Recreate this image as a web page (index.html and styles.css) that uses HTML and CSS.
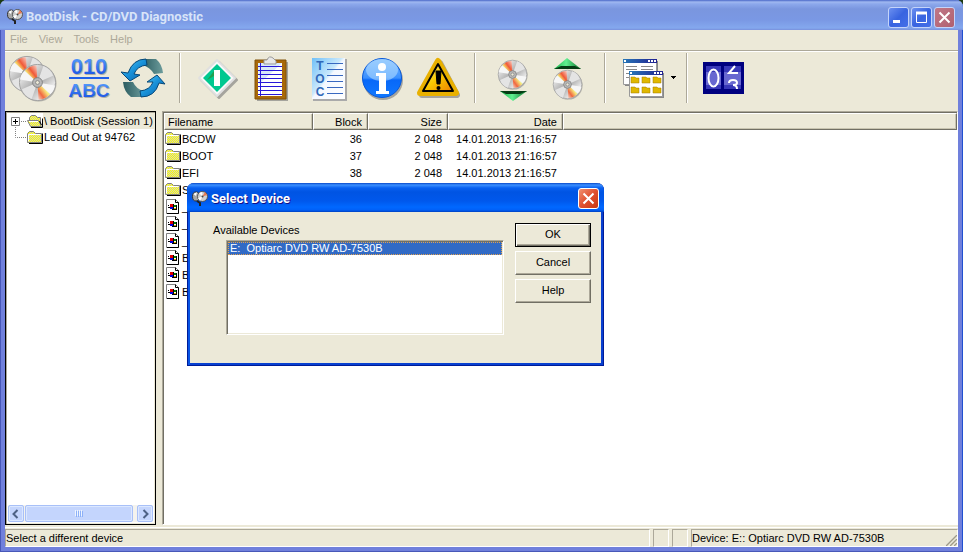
FILE: index.html
```html
<!DOCTYPE html>
<html lang="en">
<head>
<meta charset="utf-8">
<title>BootDisk - CD/DVD Diagnostic</title>
<link rel="stylesheet" href="styles.css">
</head>
<body>
<svg class="defs" aria-hidden="true">
  <defs>
    <linearGradient id="gSilver" x1="0" y1="0" x2="1" y2="1"><stop offset="0" stop-color="#909090"/><stop offset=".25" stop-color="#dcdcdc"/><stop offset=".5" stop-color="#a8a8a8"/><stop offset=".75" stop-color="#e8e8e8"/><stop offset="1" stop-color="#848484"/></linearGradient>
    <linearGradient id="gRainA" x1="0" y1="1" x2="1" y2="0"><stop offset=".1" stop-color="#8ce0d8"/><stop offset=".35" stop-color="#f8f070"/><stop offset=".6" stop-color="#f05838"/><stop offset="1" stop-color="#f8d8d0"/></linearGradient>
    <linearGradient id="gRainB" x1="1" y1="0" x2="0" y2="1"><stop offset=".1" stop-color="#60d8e0"/><stop offset=".4" stop-color="#f8f080"/><stop offset=".7" stop-color="#f06840"/><stop offset="1" stop-color="#f0e0d8"/></linearGradient>
    <linearGradient id="gArrow" x1="0" y1="0" x2="1" y2="1"><stop offset="0" stop-color="#58d0f8"/><stop offset=".5" stop-color="#1890d8"/><stop offset="1" stop-color="#0860a8"/></linearGradient>
    <linearGradient id="gTeal" x1="0" y1="0" x2="1" y2="0"><stop offset="0" stop-color="#2c5c60"/><stop offset="1" stop-color="#6c9c9c"/></linearGradient>
    <linearGradient id="gInfo" x1="0" y1="0" x2="0" y2="1"><stop offset="0" stop-color="#78b8ff"/><stop offset=".5" stop-color="#3a90ff"/><stop offset=".55" stop-color="#0868f8"/><stop offset="1" stop-color="#1078ff"/></linearGradient>
    <linearGradient id="gWarn" x1="0" y1="0" x2="1" y2="1"><stop offset="0" stop-color="#fff080"/><stop offset=".5" stop-color="#f8c800"/><stop offset="1" stop-color="#f08000"/></linearGradient>
    <linearGradient id="gPaper" x1="0" y1="0" x2="1" y2="1"><stop offset="0" stop-color="#70c0f8"/><stop offset=".45" stop-color="#c8e8fc"/><stop offset=".5" stop-color="#f4f8ff"/><stop offset="1" stop-color="#ffffff"/></linearGradient>
    <linearGradient id="gGreen" x1="0" y1="0" x2="1" y2="0"><stop offset="0" stop-color="#18b048"/><stop offset=".45" stop-color="#60f090"/><stop offset="1" stop-color="#087028"/></linearGradient>
    <linearGradient id="gCap" x1="0" y1="0" x2="1" y2="0"><stop offset="0" stop-color="#2878b8"/><stop offset="1" stop-color="#202090"/></linearGradient>
    <linearGradient id="gText" x1="0" y1="0" x2="0" y2="1"><stop offset="0" stop-color="#60a8ff"/><stop offset="1" stop-color="#1048e0"/></linearGradient>
    <pattern id="dither" width="2" height="2" patternUnits="userSpaceOnUse"><rect width="2" height="2" fill="#ffff00"/><rect x="1" width="1" height="1" fill="#d0d0c0"/><rect y="1" width="1" height="1" fill="#d0d0c0"/></pattern>
    <symbol id="cd" viewBox="0 0 40 40">
      <circle cx="21" cy="21" r="18.500" fill="#777" opacity=".5"/>
      <circle cx="20" cy="20" r="18.500" fill="url(#gSilver)" stroke="#a0a0a0"/>
      <path d="M20 20 2 17Q3 11 7 8ZM20 20 38 23Q37 29 33 32Z" fill="#f6f6f6"/>
      <path d="M20 20 26 3Q34 6 36 13ZM20 20 14 37Q6 34 4 27Z" fill="#e4e4e4"/>
      <path d="M20 20 7 8Q13 2 19 2.500Z" fill="url(#gRainA)"/>
      <path d="M20 20 33 32Q27 38 21 37.500Z" fill="url(#gRainB)"/>
      <circle cx="20" cy="20" r="5" fill="#b8b8b8" stroke="#808080"/>
      <circle cx="20" cy="20" r="2" fill="#ece9d8" stroke="#888"/>
    </symbol>
    <symbol id="app" viewBox="0 0 16 16">
      <ellipse cx="4" cy="5.500" rx="3.500" ry="4.500" fill="#a8a8a8" stroke="#333"/>
      <path d="M4 5 1.500 3 5 1Z" fill="#fff"/>
      <circle cx="10.500" cy="5.500" r="5" fill="#d0d0d0" stroke="#555"/>
      <path d="M10.500 5.500 13 1 15 4Z" fill="#e87850"/><path d="M10.500 5.500 8 10 6 7Z" fill="#fff"/><path d="M10.500 5.500 7 2 10 1Z" fill="#fff"/>
      <circle cx="10.500" cy="5.500" r="1" fill="#444"/>
      <path d="M5 10 8 12 8 15" fill="none" stroke="#222" stroke-width="2"/>
    </symbol>
    <symbol id="folder" viewBox="0 0 16 15">
      <path d="M2 13.500H15.500V3.500" fill="none" stroke="#000"/>
      <path d="M.5 12.500V3.500L2.500 1.500H6.500L8.500 3.500H14.500V12.500Z" fill="url(#dither)" stroke="#808080"/>
      <path d="M1.500 11.500V4.500H13.500" fill="none" stroke="#fff"/>
    </symbol>
    <symbol id="folderOpen" viewBox="0 0 16 15">
      <path d="M2.500 7.500V3.500L4.500 1.500H8.500L10.500 3.500H13.500V12.500" fill="url(#dither)" stroke="#808080"/>
      <path d="M.5 6.500H11.500L14.500 12.500H3.500Z" fill="url(#dither)" stroke="#808080"/>
      <path d="M2 7.500H11" stroke="#fff"/>
      <path d="M4 13.500H15.500V4.500M12.500 7 14.500 11" fill="none" stroke="#000"/>
    </symbol>
    <symbol id="file" viewBox="0 0 14 15">
      <path d="M.5 .5H9.500L12.500 3.500V14.500H.5Z" fill="#fff" stroke="#808080"/>
      <path d="M9.500 .5V3.500H12.500V14.500H1" fill="none" stroke="#000"/>
      <path d="M4 5H7V8H4Z" fill="#e00000"/><path d="M8 6H10V8H8Z" fill="#008000"/>
      <path d="M4 8H7V10H4Z" fill="#0000e0"/><path d="M8 9H10V10H8Z" fill="#e0b000"/>
      <path d="M2 6.500H3M2 8.500H4M7.500 5V10M10.500 6V11M6 10.500H10" stroke="#000" fill="none"/>
    </symbol>
  </defs>
</svg>

<main class="window">
  <header class="titlebar">
    <svg class="app-icon"><use href="#app"/></svg>
    <h1>BootDisk - CD/DVD Diagnostic</h1>
    <div class="caption-buttons">
      <button class="cap" aria-label="Minimize"><svg viewBox="0 0 19 19"><path d="M4 13.500H11" stroke="#fff" stroke-width="3"/></svg></button>
      <button class="cap" aria-label="Maximize"><svg viewBox="0 0 19 19"><path d="M4.500 4.500H14.500V14.500H4.500Z" fill="none" stroke="#fff"/><path d="M4 5H15" stroke="#fff" stroke-width="3"/></svg></button>
      <button class="cap cap-close" aria-label="Close"><svg viewBox="0 0 19 19"><path d="M4.500 4.500 14.500 14.500M14.500 4.500 4.500 14.500" stroke="#fff" stroke-width="2"/></svg></button>
    </div>
  </header>

  <nav class="menubar">
    <button>File</button><button>View</button><button>Tools</button><button>Help</button>
  </nav>

  <div class="toolbar">
    <button aria-label="Select device"><svg viewBox="0 0 48 48"><use href="#cd" x="-1" y="1" width="38" height="38"/><use href="#cd" x="9" y="9" width="39" height="39"/></svg></button>
    <button aria-label="View data"><svg viewBox="0 0 48 48">
      <g class="bits" fill="#888" opacity=".6"><text x="26" y="21">010</text><text class="abc" x="26" y="44">ABC</text></g>
      <g class="bits" fill="url(#gText)"><text x="25" y="20">010</text><text class="abc" x="25" y="43">ABC</text></g>
      <path d="M5 24H45" stroke="#2060e8" stroke-width="2"/></svg></button>
    <button aria-label="Refresh"><svg viewBox="0 0 48 48">
      <path d="M23 5H37Q43 10 44 19L35 20Q31 13 23 11Z" fill="url(#gTeal)"/>
      <path d="M27 5Q14 5 9 19L2 18 11 27 21 21 15 20Q18 12 28 11Z" fill="url(#gArrow)" stroke="#084878"/>
      <path d="M25 43H12Q5 38 4 28L14 28Q17 35 25 37Z" fill="url(#gTeal)"/>
      <path d="M22 43Q36 43 40 29L46 30 38 21 28 28 34 28Q31 36 21 37Z" fill="url(#gArrow)" stroke="#084878"/></svg></button>
    <span class="sep"></span>
    <button aria-label="Start"><svg viewBox="0 0 48 48">
      <path d="M25 8 43 26 25 44 7 26Z" fill="#777" stroke="#777" stroke-linejoin="round" stroke-width="2" opacity=".6"/>
      <path d="M23 6 41 24 23 42 5 24Z" fill="#fafafa" stroke="#e0e0e0" stroke-linejoin="round" stroke-width="2"/>
      <path d="M23 10 37 24 23 38 9 24Z" fill="#00c890"/><path d="M13 26 20 17V22Z" fill="#20a050"/>
      <path d="M23 16V32" stroke="#fff" stroke-width="6"/></svg></button>
    <button aria-label="Log"><svg viewBox="0 0 48 48">
      <path d="M8 8H39V47H8Z" fill="#777" opacity=".6"/><path d="M6 6H37V45H6Z" fill="#a86808" stroke="#805008"/>
      <path d="M9 9H33V42H9Z" fill="#fff"/><path d="M9 9H33L10 30Z" fill="#d8e8f8"/>
      <path d="M9 12.500H33M9 16.500H33M9 20.500H33M9 24.500H33M9 28.500H33M9 32.500H33M9 36.500H33M9 40.500H33M11.500 9V42" stroke="#2818d8" fill="none"/>
      <path d="M15 10V6H18Q20 1 24 4L27 7V10Z" fill="#e8e8e8" stroke="#999"/></svg></button>
    <button aria-label="Table of contents"><svg viewBox="0 0 48 48">
      <path d="M9 5H43V47H9Z" fill="#aaa"/><path d="M8 4H41V45H8Z" fill="url(#gPaper)"/>
      <g class="toc"><text x="16" y="16">T</text><text x="16" y="29">O</text><text x="16" y="42">C</text></g>
      <path d="M23 9.500H39M23 15.500H39M23 21.500H39M23 27.500H39M23 33.500H39M23 39.500H39" stroke="#3868c0"/></svg></button>
    <button aria-label="Information"><svg viewBox="0 0 48 48">
      <circle cx="24" cy="26" r="20" fill="#777" opacity=".6"/><circle cx="23" cy="24" r="19.500" fill="url(#gInfo)" stroke="#0858d8"/>
      <ellipse cx="23" cy="16" rx="16" ry="11" fill="#b8e0ff" opacity=".55"/>
      <circle cx="23" cy="13" r="4" fill="#fff"/><path d="M17 19H27V37H30V40H17V37H20V22H17Z" fill="#fff"/></svg></button>
    <button aria-label="Warning"><svg viewBox="0 0 48 48">
      <path d="M26 9 43 41H8Z" fill="#777" stroke="#777" stroke-width="6" stroke-linejoin="round" opacity=".6"/>
      <path d="M24 7 42 39H6Z" fill="url(#gWarn)" stroke="#e8b000" stroke-width="6" stroke-linejoin="round"/>
      <path d="M24 10 39 37H9Z" fill="url(#gWarn)" stroke="#000" stroke-width="2" stroke-linejoin="round"/>
      <path d="M22 17H27L26 30H23Z" fill="#000" stroke="#000"/><circle cx="24.500" cy="34" r="2" fill="#000"/></svg></button>
    <span class="sep"></span>
    <button aria-label="Load disc"><svg viewBox="0 0 48 48"><use href="#cd" x="8" y="5" width="31" height="31"/>
      <path d="M11 37H38L24 47Z" fill="url(#gGreen)"/><path d="M11 37H38L31 40H17Z" fill="#043c14"/></svg></button>
    <button aria-label="Eject disc"><svg viewBox="0 0 48 48"><use href="#cd" x="8" y="15" width="31" height="31"/>
      <path d="M10 15H37L23 4Z" fill="url(#gGreen)"/><path d="M10 15H37L31 12H17Z" fill="#043c14"/></svg></button>
    <span class="sep"></span>
    <button aria-label="Windows view"><svg viewBox="0 0 48 48">
      <path d="M6 7H39V32H6Z" fill="#888"/><path d="M4.500 5.500H37.500V30.500H4.500Z" fill="#fff" stroke="#999"/><path d="M4 5H38V9H4Z" fill="url(#gCap)"/>
      <path d="M7 12.500H18M22 12.500H34M7 15.500H18M22 15.500H34M7 19.500H10M7 23.500H10" stroke="#888"/>
      <path d="M12 19H45V44H12Z" fill="#888"/><path d="M10.500 17.500H43.500V42.500H10.500Z" fill="#fff" stroke="#999"/><path d="M10 17H44V21H10Z" fill="url(#gCap)"/>
      <path d="M5 7H7M29 7H31M32 7H34M35 7H37M11 19H13M35 19H37M38 19H40M41 19H43" stroke="#fff" stroke-width="2"/>
      <path d="M12 23H16L17 24H20V29H12ZM23 23H27L28 24H31V29H23ZM34 23H38L39 24H42V29H34ZM12 33H16L17 34H20V39H12ZM23 33H27L28 34H31V39H23ZM34 33H38L39 34H42V39H34Z" fill="#e0b800" stroke="#a07800" stroke-width=".5"/></svg></button>
    <button class="drop" aria-label="More views"><svg viewBox="0 0 7 4"><path d="M1 0H6V1H5V2H4V3H3V2H2V1H1Z" fill="#000"/></svg></button>
    <span class="sep"></span>
    <button aria-label="Counter"><svg viewBox="0 0 48 48">
      <path d="M2 8H43V40H2Z" fill="#000080"/><path d="M5 12H20V35H5ZM23 12H40V35H23Z" fill="#3838b8"/><path d="M5 18H20V31H5ZM23 18H40V31H23Z" fill="#6868d0"/>
      <ellipse cx="12.500" cy="24" rx="5" ry="8.500" fill="none" stroke="#fff" stroke-width="2"/>
      <path d="M34 12 28 19H37M28 29Q28 26 32 26 36 26 36 29 36 31 32 31 36 31 36 35" fill="none" stroke="#fff" stroke-width="2"/></svg></button>
  </div>

  <div class="panes">
    <section class="tree">
      <ul>
        <li class="current"><svg class="twig" viewBox="0 0 19 16"><path d="M3.500 4.500H11.500V12.500H3.500Z" fill="#fff" stroke="#808080"/><path d="M5 8.500H10M7.500 6V11" stroke="#000"/><path d="M13 8.500H19M7.500 14V16" stroke="#808080" stroke-dasharray="1 1"/></svg><svg class="glyph"><use href="#folderOpen"/></svg><span>\ BootDisk (Session 1)</span></li>
        <li><svg class="twig" viewBox="0 0 19 16"><path d="M7.500 0V8.500H19" fill="none" stroke="#808080" stroke-dasharray="1 1"/></svg><svg class="glyph"><use href="#folder"/></svg><span>Lead Out at 94762</span></li>
      </ul>
      <div class="scrollbar">
        <button aria-label="Scroll left"><svg viewBox="0 0 14 14"><path d="M8.500 3 4.500 7 8.500 11" fill="none" stroke="#4d6185" stroke-width="2"/></svg></button>
        <div class="thumb"><svg viewBox="0 0 8 7"><path d="M.5 0V6M2.500 0V6M4.500 0V6M6.500 0V6" stroke="#eef4fe"/><path d="M1.500 1V7M3.500 1V7M5.500 1V7M7.500 1V7" stroke="#8cb0f8"/></svg></div>
        <button aria-label="Scroll right"><svg viewBox="0 0 14 14"><path d="M5.500 3 9.500 7 5.500 11" fill="none" stroke="#4d6185" stroke-width="2"/></svg></button>
      </div>
    </section>

    <section class="list">
      <table>
        <colgroup><col class="c-name"><col class="c-block"><col class="c-size"><col class="c-date"><col></colgroup>
        <thead><tr><th class="left">Filename</th><th>Block</th><th>Size</th><th>Date</th><th></th></tr></thead>
        <tbody>
          <tr><td class="left"><svg class="glyph"><use href="#folder"/></svg>BCDW</td><td>36</td><td>2 048</td><td>14.01.2013 21:16:57</td><td></td></tr>
          <tr><td class="left"><svg class="glyph"><use href="#folder"/></svg>BOOT</td><td>37</td><td>2 048</td><td>14.01.2013 21:16:57</td><td></td></tr>
          <tr><td class="left"><svg class="glyph"><use href="#folder"/></svg>EFI</td><td>38</td><td>2 048</td><td>14.01.2013 21:16:57</td><td></td></tr>
          <tr><td class="left"><svg class="glyph"><use href="#folder"/></svg>S</td><td></td><td></td><td></td><td></td></tr>
          <tr><td class="left"><svg class="glyph"><use href="#file"/></svg>_</td><td></td><td></td><td></td><td></td></tr>
          <tr><td class="left"><svg class="glyph"><use href="#file"/></svg>_</td><td></td><td></td><td></td><td></td></tr>
          <tr><td class="left"><svg class="glyph"><use href="#file"/></svg>_</td><td></td><td></td><td></td><td></td></tr>
          <tr><td class="left"><svg class="glyph"><use href="#file"/></svg>B</td><td></td><td></td><td></td><td></td></tr>
          <tr><td class="left"><svg class="glyph"><use href="#file"/></svg>B</td><td></td><td></td><td></td><td></td></tr>
          <tr><td class="left"><svg class="glyph"><use href="#file"/></svg>B</td><td></td><td></td><td></td><td></td></tr>
        </tbody>
      </table>
    </section>
  </div>

  <footer class="status">
    <span class="message">Select a different device</span><span class="slot"></span><span class="slot"></span>
    <span class="device">Device: E:: Optiarc DVD RW AD-7530B<svg class="grip" viewBox="0 0 12 12"><path d="M0 12 12 0M4 12 12 4M8 12 12 8" stroke="#fff" stroke-width="1"/><path d="M1 12 12 1M5 12 12 5M9 12 12 9" stroke="#a09c88" stroke-width="1.500"/></svg></span>
  </footer>

  <form class="dialog" role="dialog" aria-labelledby="dlgTitle">
    <header class="dialog-title">
      <svg class="app-icon"><use href="#app"/></svg>
      <h2 id="dlgTitle">Select Device</h2>
      <button type="button" class="cap cap-close" aria-label="Close"><svg viewBox="0 0 19 19"><path d="M4.500 4.500 14.500 14.500M14.500 4.500 4.500 14.500" stroke="#fff" stroke-width="2"/></svg></button>
    </header>
    <div class="dialog-body">
      <div class="field">
        <label for="devices">Available Devices</label>
        <select id="devices" size="6"><option selected>E:&nbsp; Optiarc DVD RW AD-7530B</option></select>
      </div>
      <div class="actions">
        <button type="button" class="push default">OK</button>
        <button type="button" class="push">Cancel</button>
        <button type="button" class="push">Help</button>
      </div>
    </div>
  </form>
</main>
</body>
</html>
```
FILE: styles.css
```css
* { box-sizing: border-box; }
html, body { height: 100%; margin: 0; }
body {
  background: #1c3a12;
  font: 11px/14px "Liberation Sans", Arial, sans-serif;
  color: #000;
  overflow: hidden;
}
button, select { font: inherit; color: inherit; }
button { padding: 0; border: 0; background: none; }
svg { display: block; }
.defs { position: absolute; width: 0; height: 0; }

.window {
  position: relative;
  display: flex;
  flex-direction: column;
  height: 100%;
  padding: 0 5px 5px;
  background: #ece9d8;
  border-radius: 7px 7px 0 0;
  box-shadow: inset 1px -1px #4858b8, inset -1px 0 #2050d0, inset 5px 0 #7080dc, inset -5px -5px #7080dc;
}

.titlebar {
  display: flex;
  align-items: center;
  flex: none;
  height: 30px;
  margin: 0 -5px;
  padding: 4px 8px 0 7px;
  gap: 3px;
  background: linear-gradient(#4a68c8 0, #a0b8f0 2px, #8ca8ec 4px, #7a96df 9px, #7a98e4 20px, #84a8ee 28px, #7890dc 30px);
  border-radius: 7px 7px 0 0;
}
.app-icon { width: 16px; height: 16px; }
.titlebar h1, .dialog-title h2 {
  flex: 1;
  margin: 0;
  font: bold 13px/18px Roboto, sans-serif;
  color: #d8e4f8;
}
.caption-buttons { display: flex; gap: 2px; }
.cap {
  width: 21px;
  height: 21px;
  border: 1px solid #c4d4fa;
  border-radius: 3px;
  background: linear-gradient(135deg, #6c90f0, #3864e0 50%, #4470e8);
}
.titlebar .cap-close { background: linear-gradient(135deg, #c07888, #b06070); }

.menubar { display: flex; flex: none; height: 20px; padding: 0 5px 2px; gap: 11px; }
.menubar button { color: #aca899; }

.toolbar {
  display: flex;
  align-items: center;
  flex: none;
  height: 61px;
  padding-bottom: 7px;
  border-top: 1px solid #aca899;
  box-shadow: inset 0 1px #fff;
}
.toolbar button { width: 55px; }
.toolbar button svg { width: 48px; height: 48px; margin: 0 auto; }
.toolbar .drop { width: 7px; }
.toolbar .drop svg { width: 7px; height: 4px; }
.toolbar .sep { width: 2px; height: 50px; margin: 0 9px; background: linear-gradient(90deg, #aca899 1px, #fff 1px); }
.bits text { font: bold 22px "Liberation Sans", sans-serif; text-anchor: middle; }
.bits .abc { font-size: 19px; }
.toc text { font: bold 12px/12px "Liberation Sans", sans-serif; text-anchor: middle; fill: #3068b8; }

.panes { display: flex; flex: 1; min-height: 0; gap: 6px; padding-bottom: 2px; }
.tree {
  display: flex;
  flex-direction: column;
  justify-content: space-between;
  width: 151px;
  border: 1px solid #000;
  background: #fff;
  box-shadow: inset 1px 1px #aca899, inset -1px -1px #ece9d8;
}
.tree ul { margin: 0; padding: 1px 2px 0; list-style: none; }
.tree li { display: flex; align-items: center; height: 16px; white-space: nowrap; }
.tree .twig { flex: none; width: 19px; height: 16px; }
.glyph { flex: none; width: 16px; height: 15px; }
.tree li span { padding: 1px; }
.current span { background: #ece9d8; }

.scrollbar { display: flex; height: 17px; margin: 0 2px 2px; gap: 1px; background: #f4f3ee; }
.scrollbar button, .thumb { height: 17px; border: 1px solid #a8c0f8; border-radius: 2px; background: #c4d5fd; box-shadow: inset 0 0 0 1px #dce8ff; }
.scrollbar button { width: 16px; }
.scrollbar button svg { width: 14px; height: 14px; }
.thumb { width: 108px; display: flex; align-items: center; justify-content: center; }
.scrollbar button:last-child { margin-left: auto; }
.thumb svg { width: 8px; height: 7px; }

.list { flex: 1; border: 1px solid; border-color: #aca899 #fff #fff #aca899; box-shadow: inset 1px 1px #716f64; background: #fff; padding: 1px 0 0 1px; overflow: hidden; }
.list table { width: 100%; table-layout: fixed; border-collapse: separate; border-spacing: 0; }
.c-name { width: 149px; }
.c-block { width: 55px; }
.c-size { width: 80px; }
.c-date { width: 115px; }
.list th {
  height: 17px;
  padding: 1px 5px 0;
  font-weight: normal;
  text-align: right;
  line-height: 14px;
  background: #ece9d8;
  border: 1px solid;
  border-color: #fff #716f64 #716f64 #fff;
  box-shadow: inset -1px -1px #c8c4b0;
}
.list td { height: 17px; padding: 1px 6px 0 0; text-align: right; line-height: 16px; white-space: nowrap; }
.list th.left { text-align: left; padding-left: 3px; }
.list td.left { display: flex; align-items: center; text-align: left; padding: 0 0 0 1px; gap: 1px; }

.status { display: flex; flex: none; height: 20px; padding-top: 1px; gap: 3px; border-top: 1px solid #fff; }
.status span { border: 1px solid; border-color: #aca899 #fff #fff #aca899; line-height: 16px; }
.message { flex: 1; }
.slot { width: 16px; }
.device { display: flex; justify-content: space-between; align-items: flex-end; width: 267px; }
.grip { width: 12px; height: 12px; }

.dialog {
  position: absolute;
  left: 187px;
  top: 183px;
  width: 417px;
  height: 183px;
  padding: 0 3px 3px;
  background: #ece9d8;
  border-radius: 7px 7px 0 0;
  box-shadow: inset 1px -1px #001c98, inset -1px 0 #001c98, inset 3px 0 #0854e4, inset -3px -3px #0840d0;
}
.dialog-title {
  display: flex;
  align-items: center;
  height: 29px;
  margin: 0 -3px;
  padding: 2px 5px 0;
  gap: 3px;
  background: linear-gradient(#0848c8 0, #3c90ff 2px, #0860f0 5px, #0054e3 9px, #0058ec 18px, #0068ff 24px, #0060f8 27px, #0040c0 29px);
  border-radius: 7px 7px 0 0;
}
.dialog-title h2 { color: #fff; text-shadow: 1px 1px #0f1089; }
.dialog .cap-close { border-color: #fff; background: linear-gradient(135deg, #f09070, #e05030 50%, #c83810); }
.dialog-body { display: flex; justify-content: space-between; padding: 11px 10px 0 23px; }
.field { display: flex; flex-direction: column; gap: 3px; }
#devices {
  width: 278px;
  height: 95px;
  margin-left: 13px;
  padding: 0;
  border: 1px solid;
  border-color: #aca899 #fff #fff #aca899;
  border-radius: 0;
  background: #fff;
  box-shadow: inset 1px 1px #716f64, inset -1px -1px #ece9d8;
  outline: 0;
  overflow: hidden;
}
#devices option { min-height: 13px; margin: 1px; padding: 0 2px; line-height: 13px; }
#devices option:checked { background: linear-gradient(#316ac5, #316ac5); color: #fff; -webkit-text-fill-color: #fff; outline: 1px dotted #e0a050; outline-offset: -1px; }
.actions { display: flex; flex-direction: column; gap: 4px; }
.push {
  width: 76px;
  height: 24px;
  padding-bottom: 2px;
  background: #ece9d8;
  border: 1px solid;
  border-color: #fff #716f64 #716f64 #fff;
  box-shadow: inset -1px -1px #aca899;
}
.push.default { border-color: #000; box-shadow: inset 1px 1px #fff, inset -1px -1px #716f64, inset -2px -2px #aca899; }
```
